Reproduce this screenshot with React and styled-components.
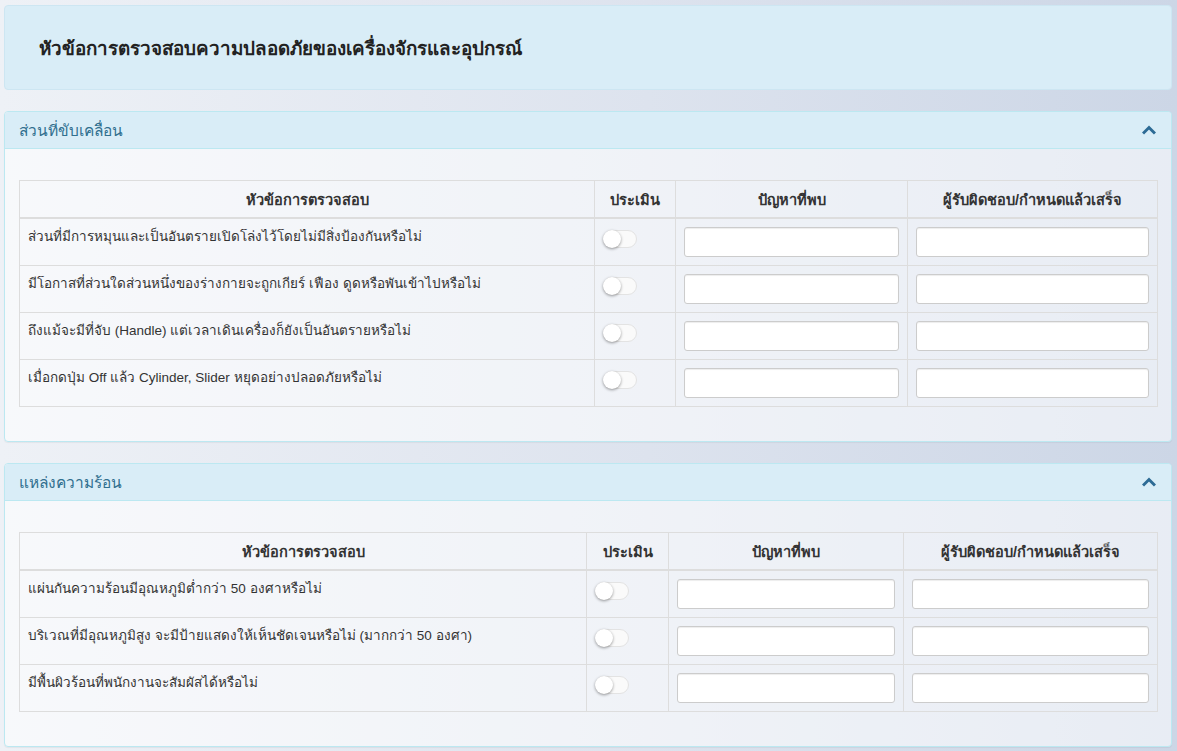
import styled, { createGlobalStyle } from "styled-components";

const GlobalStyle = createGlobalStyle`
  html, body {
    margin: 0;
    padding: 0;
  }
  body {
    min-height: 100vh;
    font-family: "Liberation Sans", "Noto Sans", sans-serif;
    font-size: 13px;
    color: #333;
    background: linear-gradient(90deg, #eef1f6 0%, #dde3ee 55%, #ccd6e6 100%);
  }
`;

const Page = styled.div`
  padding: 5px 5px 0 4px;
  display: flex;
  flex-direction: column;
  gap: 21px;
`;

const TitleBox = styled.div`
  height: 85px;
  box-sizing: border-box;
  background: #d9edf7;
  border: 1px solid #cde6f2;
  border-radius: 4px;
  padding: 0 34px;
  display: flex;
  align-items: center;
`;

const Title = styled.h1`
  margin: 0;
  font-size: 18.8px;
  font-weight: bold;
  color: #222;
`;

const Panel = styled.section`
  border: 1px solid #bce8f1;
  border-radius: 4px;
  background: rgba(255, 255, 255, 0.55);
  box-shadow: 0 1px 1px rgba(0, 0, 0, 0.05);
`;

const PanelHeading = styled.div`
  height: 37px;
  box-sizing: border-box;
  padding: 0 15px 0 14px;
  background: #d9edf7;
  border-bottom: 1px solid #bce8f1;
  border-radius: 3px 3px 0 0;
  display: flex;
  align-items: center;
  justify-content: space-between;
`;

const PanelTitle = styled.span`
  font-size: 15.5px;
  color: #31708f;
`;

const PanelBody = styled.div`
  padding: 31px 14px 34px 14px;
`;

const Table = styled.table`
  width: 100%;
  border-collapse: collapse;
  table-layout: fixed;
  border: 1px solid #dddddd;
`;

const Th = styled.th`
  height: 36px;
  padding: 0 8px;
  font-weight: bold;
  font-size: 14.6px;
  color: #333;
  text-align: center;
  border: 1px solid #dddddd;
  border-bottom: 2px solid #dddddd;
`;

const Td = styled.td`
  padding: 8px;
  height: 30px;
  vertical-align: top;
  border: 1px solid #dddddd;
  font-size: 13.5px;
  line-height: 20px;
`;

const Input = styled.input`
  display: block;
  width: 100%;
  height: 30px;
  box-sizing: border-box;
  border: 1px solid #cccccc;
  border-radius: 3px;
  background: #fff;
  box-shadow: inset 0 1px 1px rgba(0, 0, 0, 0.075);
  padding: 5px 10px;
  font-size: 13px;
`;

const Toggle = styled.span`
  display: block;
  position: relative;
  width: 34px;
  height: 18px;
  margin-top: 3px;
  box-sizing: border-box;
  border-radius: 9px;
  background: #fafafa;
  border: 1px solid #e3e3e3;
`;

const Knob = styled.span`
  position: absolute;
  left: -1px;
  top: -1px;
  width: 18px;
  height: 18px;
  border-radius: 50%;
  background: #fff;
  box-shadow: 0 1px 3px rgba(0, 0, 0, 0.4);
`;

const Chevron = () => (
  <svg width="14" height="12" viewBox="0 0 14 12">
    <path d="M1 9.5 L7 3.5 L13 9.5" fill="none" stroke="#2d6b95" strokeWidth="3" />
  </svg>
);

const sections = [
  {
    title: "ส่วนที่ขับเคลื่อน",
    cols: [575, 81, 232, 250],
    items: [
      "ส่วนที่มีการหมุนและเป็นอันตรายเปิดโล่งไว้โดยไม่มีสิ่งป้องกันหรือไม่",
      "มีโอกาสที่ส่วนใดส่วนหนึ่งของร่างกายจะถูกเกียร์ เฟือง ดูดหรือพันเข้าไปหรือไม่",
      "ถึงแม้จะมีที่จับ (Handle) แต่เวลาเดินเครื่องก็ยังเป็นอันตรายหรือไม่",
      "เมื่อกดปุ่ม Off แล้ว Cylinder, Slider หยุดอย่างปลอดภัยหรือไม่",
    ],
  },
  {
    title: "แหล่งความร้อน",
    cols: [567, 82, 235, 254],
    items: [
      "แผ่นกันความร้อนมีอุณหภูมิต่ำกว่า 50 องศาหรือไม่",
      "บริเวณที่มีอุณหภูมิสูง จะมีป้ายแสดงให้เห็นชัดเจนหรือไม่ (มากกว่า 50 องศา)",
      "มีพื้นผิวร้อนที่พนักงานจะสัมผัสได้หรือไม่",
    ],
  },
];

function Section({ title, cols, items }) {
  return (
    <Panel>
      <PanelHeading>
        <PanelTitle>{title}</PanelTitle>
        <Chevron />
      </PanelHeading>
      <PanelBody>
        <Table>
          <colgroup>
            {cols.map((w, i) => (
              <col key={i} style={{ width: w }} />
            ))}
          </colgroup>
          <thead>
            <tr>
              <Th>หัวข้อการตรวจสอบ</Th>
              <Th>ประเมิน</Th>
              <Th>ปัญหาที่พบ</Th>
              <Th>ผู้รับผิดชอบ/กำหนดแล้วเสร็จ</Th>
            </tr>
          </thead>
          <tbody>
            {items.map((text) => (
              <tr key={text}>
                <Td>{text}</Td>
                <Td>
                  <Toggle>
                    <Knob />
                  </Toggle>
                </Td>
                <Td>
                  <Input type="text" />
                </Td>
                <Td>
                  <Input type="text" />
                </Td>
              </tr>
            ))}
          </tbody>
        </Table>
      </PanelBody>
    </Panel>
  );
}

export default function App() {
  return (
    <>
      <GlobalStyle />
      <Page>
        <TitleBox>
          <Title>หัวข้อการตรวจสอบความปลอดภัยของเครื่องจักรและอุปกรณ์</Title>
        </TitleBox>
        {sections.map((s) => (
          <Section key={s.title} {...s} />
        ))}
      </Page>
    </>
  );
}
